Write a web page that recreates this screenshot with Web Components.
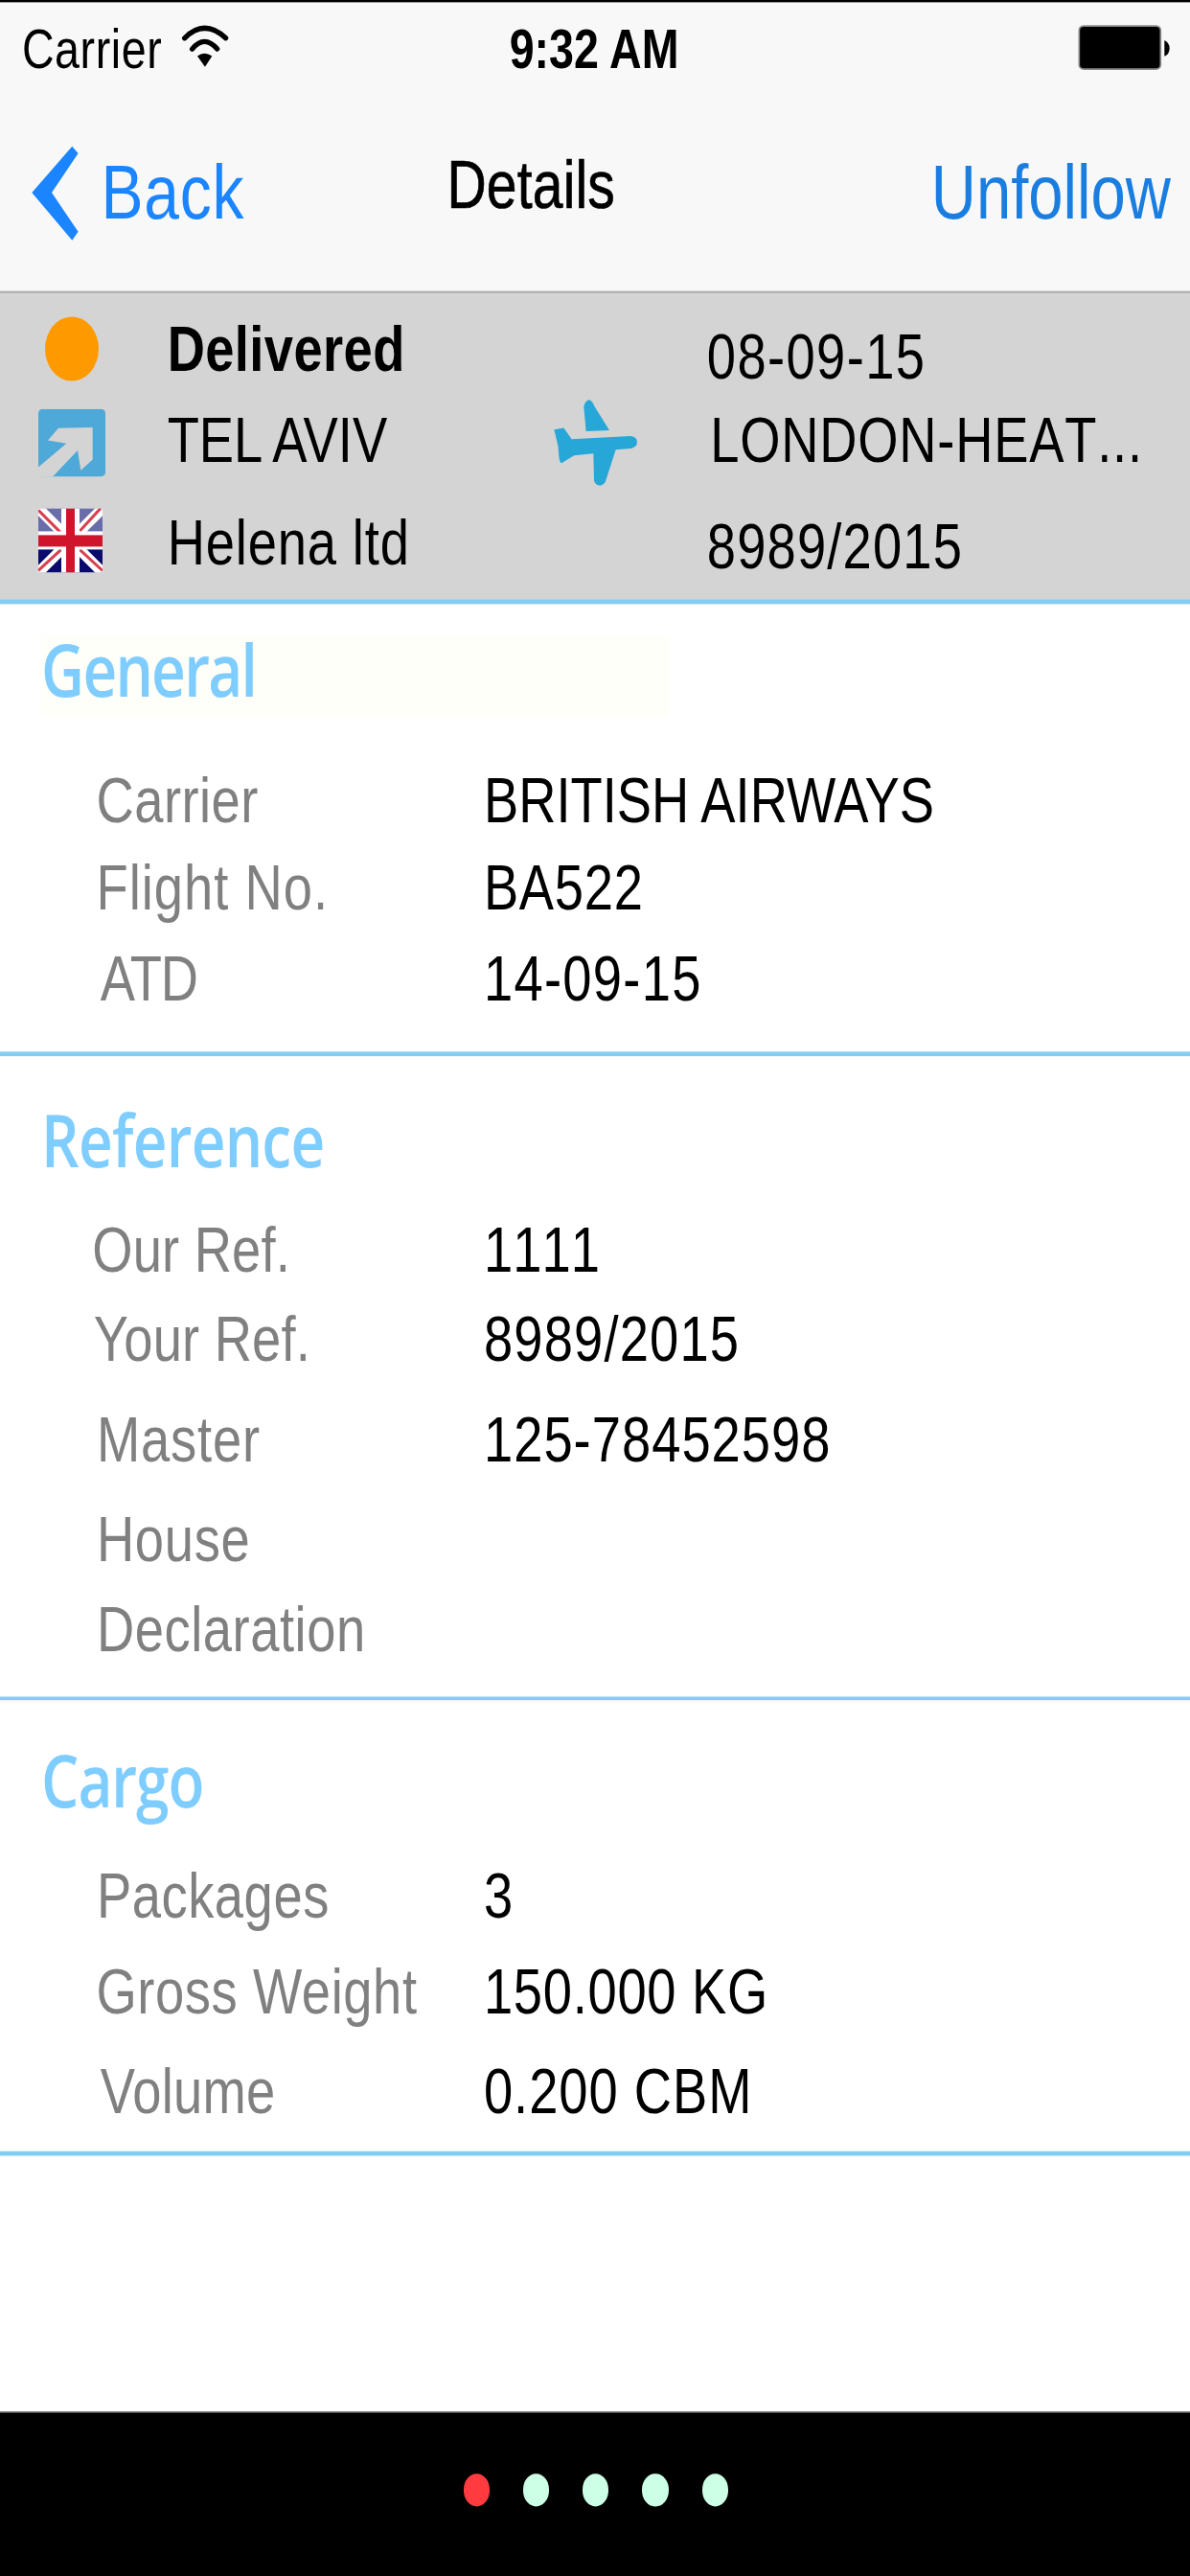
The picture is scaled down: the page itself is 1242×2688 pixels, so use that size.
<!DOCTYPE html>
<html lang="en">
<head>
<meta charset="utf-8">
<title>Details</title>
<style>
  html, body { margin: 0; padding: 0; width: 1242px; height: 2688px; overflow: hidden; background: #fff; }
</style>
</head>
<body>
<app-shell>
  <status-bar></status-bar>
  <nav-bar></nav-bar>
  <shipment-header></shipment-header>
  <detail-section heading="General" tinted top="7" bottom="8.25" track="-0.45">
    <detail-row top="10.75" indent="25.9" label="Carrier" label-track="0.12">BRITISH AIRWAYS</detail-row>
    <detail-row top="3.2" indent="25.9" label="Flight No." label-track="0.26" value-track="0.18">BA522</detail-row>
    <detail-row top="4" indent="27" label="ATD" label-track="-0.3" value-track="0.33">14-09-15</detail-row>
  </detail-section>
  <detail-section heading="Reference" top="11" bottom="6.65" track="-0.2">
    <detail-row top="5.95" indent="24.8" label="Our Ref." label-track="0.05" value-track="0.01">1111</detail-row>
    <detail-row top="3.9" indent="25.2" label="Your Ref." label-track="0.05" value-track="0.3">8989/2015</detail-row>
    <detail-row top="6.2" indent="26" label="Master" label-track="0.22" value-track="0.26">125-78452598</detail-row>
    <detail-row top="5.7" indent="26" label="House" label-track="0.18"></detail-row>
    <detail-row top="4" indent="26" label="Declaration" label-track="0.14"></detail-row>
  </detail-section>
  <detail-section heading="Cargo" top="10.2" bottom="5.3" track="-0.27">
    <detail-row top="7.3" indent="26" label="Packages" label-track="0.14" value-track="0.01">3</detail-row>
    <detail-row top="5" indent="25.9" label="Gross Weight" label-track="0.15" value-track="0.18">150.000 KG</detail-row>
    <detail-row top="6" indent="27" label="Volume" label-track="0.06" value-track="0.25">0.200 CBM</detail-row>
  </detail-section>
  <page-dots count="5" active="0" slot="footer"></page-dots>
</app-shell>

<script>
// The app was laid out on a 320x568 screen, then stretched to 1242x2688.
// zoom takes the width, scaleY the rest, so text baselines don't snap to whole 320-wide pixels.
class AppShell extends HTMLElement {
  constructor() {
    super();
    this.attachShadow({ mode: 'open' });
    this.shadowRoot.innerHTML = `
      <style>
        :host {
          display: flex; flex-direction: column;
          width: 320px; height: 568px;
          background: #fff; color: #000;
          font-family: "Liberation Sans", Arial, sans-serif;
          zoom: 3.88125;
          transform: scaleY(1.21931);
          transform-origin: 0 0;
          filter: blur(0.12px);
        }
        .main { flex: 1; min-height: 0; }
      </style>
      <div class="main"><slot></slot></div>
      <slot name="footer"></slot>
    `;
  }
}

class StatusBar extends HTMLElement {
  constructor() {
    super();
    this.attachShadow({ mode: 'open' });
    this.shadowRoot.innerHTML = `
      <style>
        :host {
          display: grid; grid-template-columns: 137px 149px 1fr;
          height: 20px; padding-top: 0.5px; box-sizing: border-box;
          background: linear-gradient(#000, #000) top / 100% 0.5px no-repeat, #f8f8f8;
          font-size: 12px; line-height: 16px;
        }
        .left { display: flex; padding-left: 5.9px; }
        .carrier { margin-top: 2.34px; letter-spacing: 0.15px; }
        .time { margin-top: 2.34px; font-weight: 700; }
        svg { display: block; width: 20.6px; height: 14.8px; margin: 1.6px 0 0 0.3px; }
        .battery { width: 34px; margin: 1.6px 0 0 0; }
      </style>
      <div class="left">
        <span class="carrier">Carrier</span>
        <svg viewBox="0 0 240 210" preserveAspectRatio="none">
          <path d="M68 90Q130 28 197 90" fill="none" stroke="#000" stroke-width="16" stroke-linecap="round"/>
          <path d="M92 124Q130 78 170 124" fill="none" stroke="#000" stroke-width="16" stroke-linecap="round"/>
          <path d="M108 146Q130 130 154 146L132 180Z" fill="#000"/>
        </svg>
      </div>
      <span class="time">9:32 AM</span>
      <svg class="battery" viewBox="0 0 396 210" preserveAspectRatio="none">
        <rect x="49" y="52" width="255" height="135" rx="14" fill="#000" stroke="#8a8a8a" stroke-width="5"/>
        <path d="M316 97Q332 105 332 122Q332 140 316 147Z" fill="#000"/>
      </svg>
    `;
  }
}

class NavBar extends HTMLElement {
  constructor() {
    super();
    this.attachShadow({ mode: 'open' });
    this.shadowRoot.innerHTML = `
      <style>
        :host {
          display: grid; grid-template-columns: 120.2px auto 1fr;
          height: 44.7px; box-sizing: border-box;
          background: linear-gradient(#b2b2b2, #b2b2b2) bottom / 100% 0.5px no-repeat, #f8f8f8;
          line-height: 20px;
        }
        .back { display: flex; padding-left: 7.73px; font-size: 17px; color: #1a85ff; }
        .back svg { display: block; width: 14.17px; height: 21.77px; margin-top: 11.7px; }
        .back span { margin: 12.5px 0 0 5.3px; letter-spacing: 0.2px; }
        .title { font-size: 14.7px; margin-top: 10.8px; letter-spacing: 0.04px; -webkit-text-stroke: 0.15px #000; }
        .action { font-size: 16.8px; color: #1a7ee0; margin-top: 12.5px; text-align: right; padding-right: 5.2px; }
      </style>
      <div class="back">
        <svg viewBox="30 150 55 103" preserveAspectRatio="none">
          <polygon points="75.3,152.7 81.6,160 54,201 81.6,241.7 75.3,250.7 33.3,201" fill="#1a85ff"/>
        </svg>
        <span>Back</span>
      </div>
      <div class="title">Details</div>
      <div class="action">Unfollow</div>
    `;
  }
}

class ShipmentHeader extends HTMLElement {
  constructor() {
    super();
    this.attachShadow({ mode: 'open' });
    this.shadowRoot.innerHTML = `
      <style>
        :host {
          display: grid; grid-template-columns: 34.7px 99.3px 45.8px 1fr;
          height: 68.45px; padding-left: 10.3px; box-sizing: border-box;
          background: linear-gradient(#83cdf5, #83cdf5) bottom / 100% 1px no-repeat, #d4d4d4;
          font-size: 14px; line-height: 16px;
        }
        .col { display: flex; flex-direction: column; align-items: flex-start; white-space: nowrap; }
        .icons { padding-top: 5px; }
        .texts { padding-top: 4.25px; }
        .plane { padding-top: 19.83px; }
        .dates { padding-top: 6.15px; font-kerning: none; }
        svg { display: block; }
        .dot { width: 14.4px; height: 14.2px; border-radius: 50%; background: #ff9900; margin-left: 1.8px; }
        b { font-weight: 700; letter-spacing: 0.1px; }
      </style>
      <div class="col icons">
        <div class="dot"></div>
        <svg style="width:18.04px;height:14.93px;margin-top:6.3px" viewBox="62 50 210 212" preserveAspectRatio="none">
          <rect x="62" y="50" width="210" height="212" rx="14" fill="#4fa9d8"/>
          <polygon points="125,110 232,108 232,208 195,242 185,180 105,264 58,264 58,236 150,158 92,148" fill="#d4d4d4"/>
        </svg>
        <svg style="width:17.26px;height:14.16px;margin-top:6.87px" viewBox="0 0 67 67" preserveAspectRatio="none">
          <rect width="67" height="33" fill="#6a6cab"/>
          <rect y="33" width="67" height="34" fill="#0b0b6e"/>
          <path d="M0 0L67 67M67 0L0 67" stroke="#fff" stroke-width="11"/>
          <path d="M0 2L25 27M65 0L42 25M67 65L42 42M0 65L25 42" stroke="#d8404f" stroke-width="3"/>
          <rect x="24" width="19" height="67" fill="#fff"/>
          <rect y="24" width="67" height="19" fill="#fff"/>
          <rect x="29" width="9" height="67" fill="#d0142c"/>
          <rect y="28" width="67" height="12" fill="#d0142c"/>
        </svg>
      </div>
      <div class="col texts">
        <b>Delivered</b>
        <span style="margin-top:4.3px">TEL AVIV</span>
        <span style="margin-top:6.6px;letter-spacing:0.22px">Helena ltd</span>
      </div>
      <div class="col plane">
        <svg style="width:30.92px;height:25.36px" viewBox="0 0 360 360" preserveAspectRatio="none">
          <path d="M55 145L85 140L110 175L295 165Q315 168 315 184Q315 200 295 204L248 208L215 310Q205 322 195 320Q182 316 180 305L178 220L118 226L78 250Q70 250 68 200Z" fill="#27a6d8"/>
          <path d="M148 75Q150 55 165 52Q175 55 180 70L228 147L155 150Z" fill="#27a6d8"/>
        </svg>
      </div>
      <div class="col dates">
        <span style="letter-spacing:0.36px">08-09-15</span>
        <span style="margin:2.3px 0 0 0.9px;letter-spacing:0.2px">LONDON-HEAT...</span>
        <span style="margin-top:7.5px;letter-spacing:0.3px">8989/2015</span>
      </div>
    `;
  }
}

class DetailSection extends HTMLElement {
  constructor() {
    super();
    this.attachShadow({ mode: 'open' });
  }

  connectedCallback() {
    const top = this.getAttribute('top') || 0;
    const bottom = Number(this.getAttribute('bottom') || 0) + 0.85;
    const track = this.getAttribute('track') || 0;
    const tint = this.hasAttribute('tinted') ? '#fefff9' : 'transparent';
    this.shadowRoot.innerHTML = `
      <style>
        :host {
          display: block;
          padding: ${top}px 0 ${bottom}px;
          background: linear-gradient(#83cdf5, #83cdf5) bottom / 100% 1px no-repeat;
        }
        h2 {
          margin: 0 0 0 11.1px; width: 169px; height: 17.8px;
          background: ${tint};
          font: 600 16px/14.6px "Open Sans", "Noto Sans", sans-serif;
          letter-spacing: ${track}px;
          color: #7fcdff;
        }
      </style>
      <h2>${this.getAttribute('heading')}</h2>
      <slot></slot>
    `;
  }
}

class DetailRow extends HTMLElement {
  constructor() {
    super();
    this.attachShadow({ mode: 'open' });
  }

  connectedCallback() {
    const top = this.getAttribute('top') || 0;
    const indent = this.getAttribute('indent') || 26;
    const labelTrack = this.getAttribute('label-track') || 0;
    const valueTrack = this.getAttribute('value-track');
    this.shadowRoot.innerHTML = `
      <style>
        :host {
          display: grid; grid-template-columns: 130.1px 1fr;
          margin-top: ${top}px;
          font-size: 14px; line-height: 16px;
        }
        .label { padding-left: ${indent}px; color: #808080; white-space: nowrap; letter-spacing: ${labelTrack}px; }
        .value {
          color: #000; white-space: nowrap;
          letter-spacing: ${valueTrack || 0}px;
          font-kerning: ${valueTrack ? 'none' : 'auto'};
        }
      </style>
      <span class="label">${this.getAttribute('label')}</span>
      <span class="value"><slot></slot></span>
    `;
  }
}

class PageDots extends HTMLElement {
  constructor() {
    super();
    this.attachShadow({ mode: 'open' });
  }

  connectedCallback() {
    const count = Number(this.getAttribute('count') || 0);
    const active = Number(this.getAttribute('active') || 0);
    let dots = '';
    for (let i = 0; i < count; i++) {
      dots += `<i class="${i === active ? 'on' : ''}"></i>`;
    }
    this.shadowRoot.innerHTML = `
      <style>
        :host {
          display: flex; align-items: center; justify-content: center; gap: 9.05px;
          height: 36.3px; box-sizing: border-box; padding: 0 0 1.6px 0.4px;
          background: linear-gradient(#666, #666) top / 100% 0.25px no-repeat, #000;
        }
        i { display: block; width: 7px; height: 7px; border-radius: 50%; background: #ccffe6; }
        i.on { background: #ff3b3f; }
      </style>
      ${dots}
    `;
  }
}

customElements.define('app-shell', AppShell);
customElements.define('status-bar', StatusBar);
customElements.define('nav-bar', NavBar);
customElements.define('shipment-header', ShipmentHeader);
customElements.define('detail-section', DetailSection);
customElements.define('detail-row', DetailRow);
customElements.define('page-dots', PageDots);
</script>
</body>
</html>
